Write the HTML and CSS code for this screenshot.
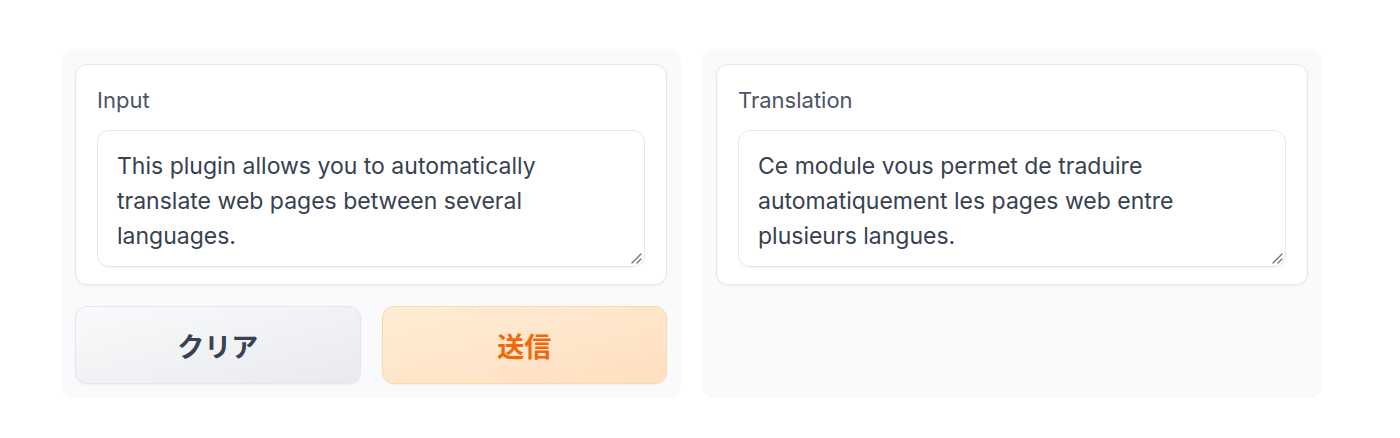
FILE: index.html
```html
<!DOCTYPE html>
<html lang="ja">
<head>
<meta charset="utf-8">
<title>Translator</title>
<link rel="stylesheet" href="styles.css">
</head>
<body>
<div class="row">
  <div class="panel">
    <div class="block">
      <label class="label">Input</label>
      <div class="textarea">This plugin allows you to automatically translate web pages between several languages.<svg class="grip" width="12" height="12" viewBox="0 0 12 12"><path d="M11 2 L2 11 M11 7 L7 11" stroke="#6b7280" stroke-width="1.3" stroke-linecap="round" fill="none"/></svg></div>
    </div>
    <div class="buttons">
      <button class="btn btn-secondary">クリア</button>
      <button class="btn btn-primary">送信</button>
    </div>
  </div>
  <div class="panel">
    <div class="block">
      <label class="label">Translation</label>
      <div class="textarea">Ce module vous permet de traduire automatiquement les pages web entre plusieurs langues.<svg class="grip" width="12" height="12" viewBox="0 0 12 12"><path d="M11 2 L2 11 M11 7 L7 11" stroke="#6b7280" stroke-width="1.3" stroke-linecap="round" fill="none"/></svg></div>
    </div>
  </div>
</div>
</body>
</html>
```
FILE: styles.css
```css
* { box-sizing: border-box; }
html, body { margin: 0; padding: 0; background: #ffffff; }
body {
  font-family: Inter, "Noto Sans CJK JP", sans-serif;
  color: #374151;
}
.row {
  display: flex;
  gap: 21px;
  padding: 49px 78px 40px 61px;
  align-items: stretch;
}
.panel {
  flex: 1;
  height: 349px;
  background: #f9fafb;
  border-radius: 12px;
  padding: 15px 14px 14px 14px;
  display: flex;
  flex-direction: column;
  gap: 21px;
}
.block {
  background: #ffffff;
  border: 1.5px solid #e5e7eb;
  border-radius: 12px;
  box-shadow: 0 1px 2px rgba(0,0,0,0.05);
  padding: 23px 21px 17px 21px;
  display: flex;
  flex-direction: column;
  gap: 18px;
  height: 221px;
}
.label {
  font-size: 22px;
  line-height: 24px;
  color: #4b5563;
}
.textarea {
  position: relative;
  border: 1.5px solid #e5e7eb;
  border-radius: 12px;
  padding: 18px 19px;
  font-size: 23px;
  line-height: 35px;
  color: #374151;
  height: 137px;
  box-shadow: 0 1px 2px rgba(0,0,0,0.04);
}
.grip {
  position: absolute;
  right: 2px;
  bottom: 2px;
}
.buttons {
  display: flex;
  gap: 21px;
}
.btn {
  flex: 1;
  height: 78px;
  border-radius: 12px;
  font-family: Inter, "Noto Sans CJK JP", sans-serif;
  font-size: 27px;
  font-weight: 700;
  cursor: pointer;
  box-shadow: 0 1px 2px rgba(0,0,0,0.05);
}
.btn-secondary {
  background: linear-gradient(to bottom right, #f9fafb, #e9eaee);
  border: 1.5px solid #e5e7eb;
  color: #374151;
}
.btn-primary {
  background: linear-gradient(to bottom right, #ffedd5, #fedfc0);
  border: 1.5px solid #fed7aa;
  color: #ec6a0c;
}
```
